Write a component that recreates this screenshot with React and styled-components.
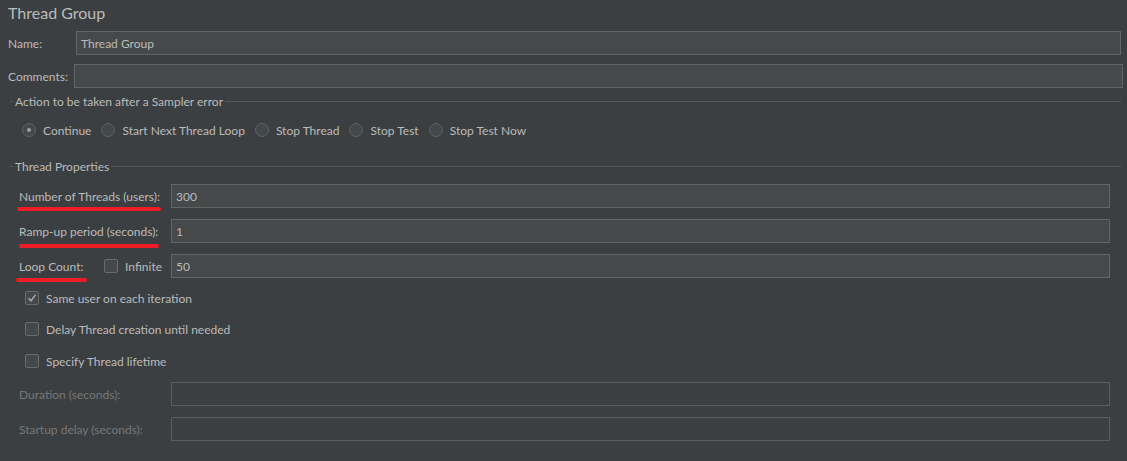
import React from 'react';
import styled, { createGlobalStyle } from 'styled-components';

const GlobalStyle = createGlobalStyle`
    html, body {
        margin: 0;
        padding: 0;
        background: #3c3f41;
    }
`;

const Panel = styled.div`
    width: 1127px;
    height: 461px;
    background: #3c3f41;
    color: #bbbbbb;
    font-family: Lato, "Noto Sans", sans-serif;
    font-size: 12px;
    white-space: nowrap;
    display: flex;
    flex-direction: column;
    overflow: hidden;
`;

const Title = styled.div`
    height: 31px;
    padding-left: 8px;
    font-size: 16px;
    line-height: 25px;
`;

const TopRow = styled.div`
    display: flex;
    align-items: center;
    height: 24px;
    margin-top: ${({ top }) => top || 0}px;
    padding-left: 8px;
    padding-right: ${({ right }) => right}px;
`;

const TopLabel = styled.label`
    width: ${({ width }) => width}px;
    flex: none;
`;

const TextInput = styled.div`
    flex: 1;
    height: 24px;
    box-sizing: border-box;
    border: 1px solid ${({ disabled }) => (disabled ? '#5a5d5e' : '#646464')};
    background: ${({ disabled }) => (disabled ? '#3c3f41' : '#45494a')};
    color: #bbbbbb;
    padding: 0 4px;
    display: flex;
    align-items: center;
`;

const Legend = styled.div`
    display: flex;
    align-items: center;
    height: 16px;
    margin-top: ${({ top }) => top}px;
    padding-left: 10px;
    padding-right: 6px;
    gap: 2px;
    &::before {
        content: '';
        width: 3px;
        height: 1px;
        background: #55585a;
    }
    &::after {
        content: '';
        flex: 1;
        height: 1px;
        background: #55585a;
    }
`;

const RadioRow = styled.div`
    display: flex;
    align-items: center;
    height: 20px;
    margin-top: 11px;
    padding-left: 22px;
    gap: 10px;
`;

const Option = styled.label`
    display: flex;
    align-items: center;
    gap: 7px;
`;

const RadioDot = styled.span`
    width: 14px;
    height: 14px;
    box-sizing: border-box;
    border-radius: 50%;
    border: 1px solid #5f6263;
    background: #43494a;
    display: flex;
    align-items: center;
    justify-content: center;
    &::after {
        content: '';
        width: 4px;
        height: 4px;
        border-radius: 50%;
        background: ${({ checked }) => (checked ? '#a0a0a0' : 'transparent')};
    }
`;

const Box = styled.span`
    width: 14px;
    height: 14px;
    box-sizing: border-box;
    border-radius: 2px;
    border: 1px solid #6b6b6b;
    background: #43494a;
    display: flex;
    align-items: center;
    justify-content: center;
    flex: none;
`;

const FieldRow = styled.div`
    display: flex;
    align-items: center;
    height: 24px;
    margin-top: ${({ top }) => top}px;
    padding-left: 19px;
    padding-right: 17px;
    color: ${({ disabled }) => (disabled ? '#777777' : '#bbbbbb')};
`;

const FieldLabel = styled.div`
    width: 152px;
    flex: none;
    display: flex;
    align-items: center;
`;

// red hand-drawn highlight under a label
const Marked = styled.span`
    position: relative;
    &::after {
        content: '';
        position: absolute;
        left: ${({ left }) => left}px;
        width: ${({ width }) => width}px;
        top: ${({ under }) => under}px;
        height: 4px;
        border-radius: 2px;
        background: #ee1c25;
    }
`;

const Infinite = styled.label`
    display: flex;
    align-items: center;
    gap: 7px;
    margin-left: auto;
    margin-right: 9px;
`;

const CheckRow = styled.label`
    display: flex;
    align-items: center;
    gap: 7px;
    height: 20px;
    margin-top: ${({ top }) => top}px;
    padding-left: 25px;
`;

function Check({ checked }) {
    return (
        <Box>
            {checked && (
                <svg width="10" height="10" viewBox="0 0 10 10">
                    <path d="M1.5 5.2 L4 7.8 L8.6 1.6" fill="none" stroke="#a9a9a9" strokeWidth="1.5" />
                </svg>
            )}
        </Box>
    );
}

const actions = ['Continue', 'Start Next Thread Loop', 'Stop Thread', 'Stop Test', 'Stop Test Now'];

function App() {
    return (
        <Panel>
            <GlobalStyle />
            <Title>Thread Group</Title>
            <TopRow right={6}>
                <TopLabel width={68}>Name:</TopLabel>
                <TextInput>Thread Group</TextInput>
            </TopRow>
            <TopRow top={9} right={4}>
                <TopLabel width={66}>Comments:</TopLabel>
                <TextInput />
            </TopRow>

            <Legend top={5}>Action to be taken after a Sampler error</Legend>
            <RadioRow>
                {actions.map((a, i) => (
                    <Option key={a}>
                        <RadioDot checked={i === 0} />
                        {a}
                    </Option>
                ))}
            </RadioRow>

            <Legend top={18}>Thread Properties</Legend>
            <FieldRow top={10}>
                <FieldLabel>
                    <Marked left={-2} width={144} under={18}>Number of Threads (users):</Marked>
                </FieldLabel>
                <TextInput>300</TextInput>
            </FieldRow>
            <FieldRow top={11}>
                <FieldLabel>
                    <Marked left={0} width={140} under={20}>Ramp-up period (seconds):</Marked>
                </FieldLabel>
                <TextInput>1</TextInput>
            </FieldRow>
            <FieldRow top={11}>
                <FieldLabel>
                    <Marked left={-3} width={71} under={19}>Loop Count:</Marked>
                    <Infinite>
                        <Check />
                        Infinite
                    </Infinite>
                </FieldLabel>
                <TextInput>50</TextInput>
            </FieldRow>

            <CheckRow top={10}>
                <Check checked />
                Same user on each iteration
            </CheckRow>
            <CheckRow top={11}>
                <Check />
                Delay Thread creation until needed
            </CheckRow>
            <CheckRow top={12}>
                <Check />
                Specify Thread lifetime
            </CheckRow>

            <FieldRow top={11} disabled>
                <FieldLabel>Duration (seconds):</FieldLabel>
                <TextInput disabled />
            </FieldRow>
            <FieldRow top={11} disabled>
                <FieldLabel>Startup delay (seconds):</FieldLabel>
                <TextInput disabled />
            </FieldRow>
        </Panel>
    );
}

export default App;
